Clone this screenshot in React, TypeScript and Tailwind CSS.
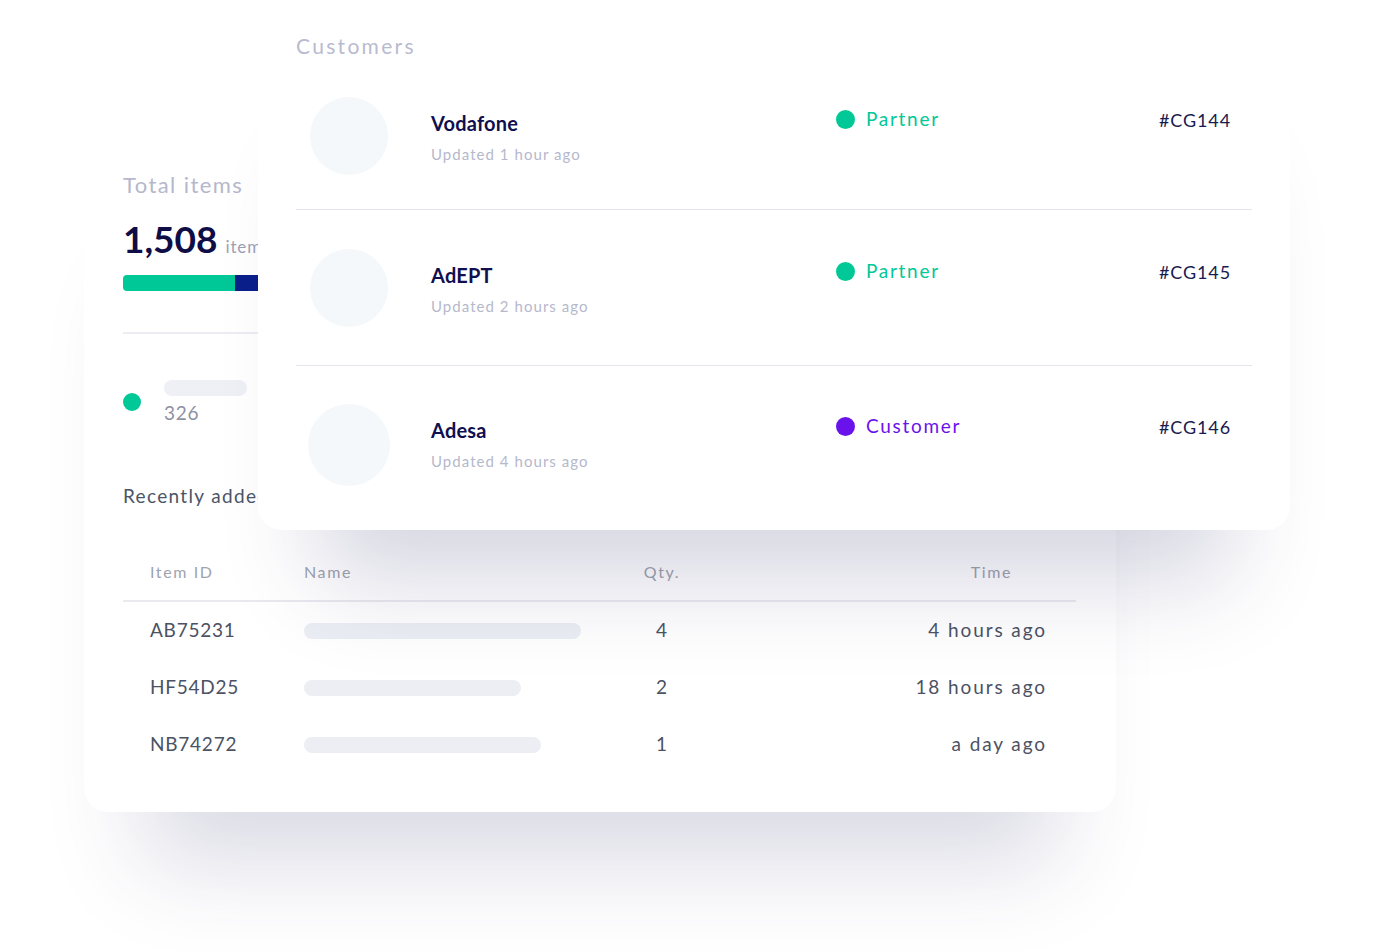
const customers = [
  { name: 'Vodafone', updated: 'Updated 1 hour ago', status: 'Partner', code: '#CG144', pt: 'pt-[38px]', pb: 'pb-[34px]', big: false },
  { name: 'AdEPT', updated: 'Updated 2 hours ago', status: 'Partner', code: '#CG145', pt: 'pt-[39px]', pb: 'pb-[38px]', big: false },
  { name: 'Adesa', updated: 'Updated 4 hours ago', status: 'Customer', code: '#CG146', pt: 'pt-[38px]', pb: 'pb-[44px]', big: true },
];

const items = [
  { id: 'AB75231', bar: 'w-[277px]', qty: '4', time: '4 hours ago' },
  { id: 'HF54D25', bar: 'w-[217px]', qty: '2', time: '18 hours ago' },
  { id: 'NB74272', bar: 'w-[237px]', qty: '1', time: 'a day ago' },
];

function CustomersCard() {
  return (
    <div className="absolute left-[258px] top-0 w-[1032px] h-[530px] rounded-b-[24px] bg-white px-[38px] pt-[33px] shadow-[0_110px_90px_-60px_rgba(50,50,110,0.2)]">
      <h3 className="text-[21px] leading-[26px] tracking-[0.11em] text-[#b9bbcf]">Customers</h3>
      {customers.map((c, i) => (
        <div
          key={c.code}
          className={`flex items-start ${c.pt} ${c.pb} ${i < customers.length - 1 ? 'border-b border-[#e4e4ee]' : ''}`}
        >
          <div className="w-[106px] flex justify-center">
            <div className={`${c.big ? 'w-[82px] h-[82px]' : 'w-[78px] h-[78px]'} rounded-full bg-[#f5f8fb]`} />
          </div>
          <div className="ml-[29px] w-[405px]">
            <div className="mt-[13px] text-[20px] leading-[26px] font-bold tracking-[0.01em] text-[#100f4f]">{c.name}</div>
            <div className="mt-[8px] text-[15px] leading-[20px] tracking-[0.07em] text-[#b6b8cc]">{c.updated}</div>
          </div>
          <div className="mt-[10px] flex items-center gap-[11px] leading-[24px]">
            <span className={`w-[19px] h-[19px] rounded-full ${c.status === 'Partner' ? 'bg-[#00c896]' : 'bg-[#6a12ec]'}`} />
            <span className={`text-[19px] tracking-[0.09em] ${c.status === 'Partner' ? 'text-[#00c896]' : 'text-[#6a12ec]'}`}>
              {c.status}
            </span>
          </div>
          <div className="ml-auto mr-[21px] mt-[11px] text-[18px] leading-[24px] tracking-[0.05em] text-[#1a1b4e]">{c.code}</div>
        </div>
      ))}
    </div>
  );
}

function ItemsCard() {
  return (
    <div className="w-[1032px] h-[692px] rounded-[24px] bg-white pl-[39px] pr-[40px] pt-[52px] shadow-[0_110px_90px_-60px_rgba(50,50,110,0.18)]">
      {/* stats */}
      <div className="w-[320px]">
        <div className="text-[22px] leading-[26px] tracking-[0.065em] text-[#b5b7cb]">Total items</div>
        <div className="mt-[19px] flex items-baseline gap-[8px] leading-[44px]">
          <span className="text-[37px] font-bold text-[#0f0d47]">1,508</span>
          <span className="text-[17px] tracking-[0.05em] text-[#9ea1b5]">items</span>
        </div>
        <div className="mt-[6px] flex h-[16px] overflow-hidden rounded-l-[4px]">
          <div className="w-[112px] bg-[#00c896]" />
          <div className="w-[90px] bg-[#0b1f8a]" />
          <div className="flex-1 bg-[#6a12ec]" />
        </div>
        <div className="mt-[41px] border-t-2 border-[#ececf2]" />
        <div className="mt-[46px] flex items-center">
          <span className="w-[18px] h-[18px] rounded-full bg-[#00c896]" />
          <div className="ml-[23px]">
            <div className="w-[83px] h-[16px] rounded-full bg-[#eef0f5]" />
            <div className="mt-[6px] text-[19px] leading-[22px] tracking-[0.04em] text-[#8e91a3]">326</div>
          </div>
        </div>
      </div>

      <div className="mt-[60px] text-[19px] leading-[24px] tracking-[0.07em] text-[#4b5468]">Recently added items</div>

      {/* table */}
      <div className="mt-[52px] w-[953px]">
        <div className="grid grid-cols-[154px_320px_76px_1fr] pl-[27px] pb-[16px] border-b-2 border-[#e9eaef] text-[16px] leading-[24px] tracking-[0.1em] text-[#9ea3ae]">
          <span>Item ID</span>
          <span>Name</span>
          <span className="text-center">Qty.</span>
          <span className="text-right pr-[64px]">Time</span>
        </div>
        {items.map((it) => (
          <div key={it.id} className="grid grid-cols-[154px_320px_76px_1fr] items-center h-[57px] pl-[27px] text-[19px] tracking-[0.04em] text-[#4b5263]">
            <span>{it.id}</span>
            <span className={`${it.bar} h-[16px] rounded-full bg-[#eceef4]`} />
            <span className="text-center">{it.qty}</span>
            <span className="text-right pr-[29px] tracking-[0.1em]">{it.time}</span>
          </div>
        ))}
      </div>
    </div>
  );
}

export default function App() {
  return (
    <main
      className="relative h-[952px] w-full overflow-hidden bg-white pl-[84px] pt-[120px]"
      style={{ fontFamily: 'Lato, "Noto Sans", sans-serif' }}
    >
      <ItemsCard />
      <CustomersCard />
    </main>
  );
}
